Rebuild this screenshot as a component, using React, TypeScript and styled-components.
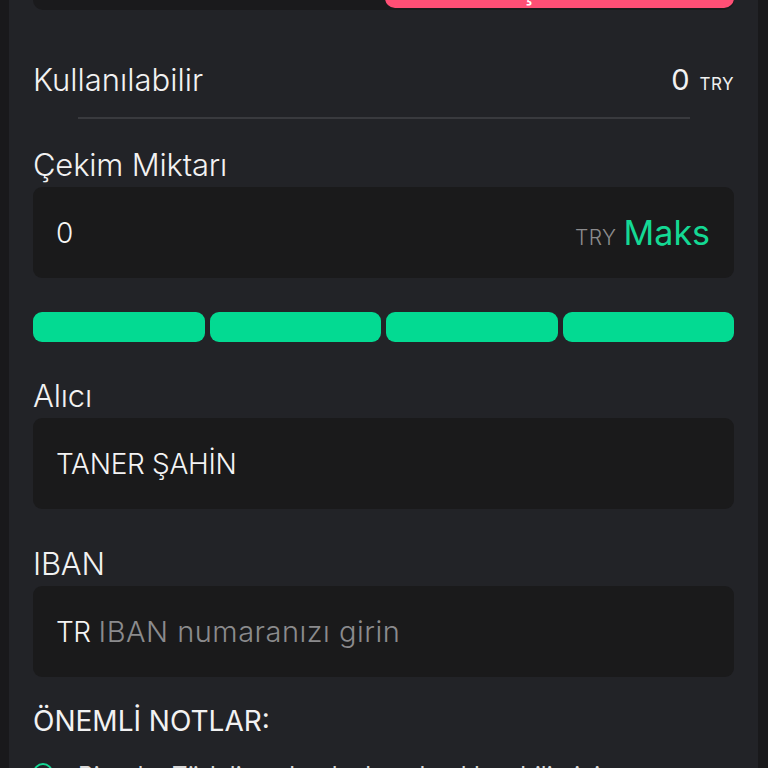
import React from "react";
import styled, { createGlobalStyle } from "styled-components";

const Global = createGlobalStyle`
  html, body { margin: 0; padding: 0; background: #19191b; }
  body { font-family: Inter, "Noto Sans", sans-serif; color: #f2f2f2; }
  * { box-sizing: border-box; }
`;

const Screen = styled.div`
  width: 768px;
  height: 768px;
  overflow: hidden;
  background: #19191b;
  display: flex;
  align-items: flex-start;
`;

const Panel = styled.div`
  margin: 0 10px 0 9px;
  flex: 1;
  min-height: 768px;
  background: #222327;
  padding: 0 24px;
  display: flex;
  flex-direction: column;
  & > * { flex-shrink: 0; }
`;

const TabBar = styled.div`
  margin-top: -40px;
  height: 50px;
  background: #1a1a1c;
  border-radius: 0 0 10px 10px;
  padding: 2px 0;
  display: grid;
  grid-template-columns: 1fr 1fr;
  gap: 2px;
`;

const Tab = styled.div<{ $active?: boolean }>`
  border-radius: 10px;
  background: ${(p) => (p.$active ? "#ff4f75" : "transparent")};
  color: ${(p) => (p.$active ? "#fff" : "#9a9a9c")};
  font-size: 28px;
  display: flex;
  align-items: flex-end;
  justify-content: center;
  line-height: 1;
  padding-bottom: ${(p) => (p.$active ? 4 : 12)}px;
  overflow: hidden;
`;

const BalanceRow = styled.div`
  margin-top: 45px;
  height: 48px;
  display: flex;
  align-items: center;
  justify-content: space-between;
`;

const BalanceLabel = styled.span`
  font-size: 31px;
  font-weight: 300;
`;

const BalanceValue = styled.span`
  display: flex;
  align-items: baseline;
  gap: 10px;
  font-size: 29px;
  font-weight: 400;
`;

const Unit = styled.span<{ $size: number; $color: string }>`
  font-size: ${(p) => p.$size}px;
  color: ${(p) => p.$color};
  letter-spacing: 0.5px;
`;

const Divider = styled.div`
  margin: 14px 44px 0 45px;
  height: 2px;
  background: #393a3e;
`;

const Label = styled.div<{ $top: number }>`
  margin-top: ${(p) => p.$top}px;
  margin-bottom: 4px;
  height: 36px;
  line-height: 36px;
  font-size: 31px;
  font-weight: 300;
  letter-spacing: -0.2px;
`;

const Field = styled.div`
  height: 91px;
  background: #1a1a1b;
  border-radius: 9px;
  padding: 0 24px 0 23px;
  display: flex;
  align-items: center;
  gap: 8px;
  font-size: 28px;
  font-weight: 300;
`;

const FieldValue = styled.span`
  flex: 1;
  color: #f4f4f4;
  letter-spacing: -0.3px;
`;

const Prefix = styled.span`
  color: #f4f4f4;
  font-weight: 300;
  letter-spacing: -0.5px;
`;

const Placeholder = styled.span`
  flex: 1;
  color: #8b8b8d;
  font-size: 29px;
  letter-spacing: 0.5px;
`;

const Suffix = styled.span`
  display: flex;
  align-items: baseline;
  gap: 7px;
`;

const MaxLink = styled.span`
  color: #14d994;
  font-size: 34px;
  font-weight: 400;
`;

const Presets = styled.div`
  margin-top: 34px;
  display: grid;
  grid-template-columns: repeat(4, 1fr);
  gap: 5px;
`;

const Preset = styled.div`
  height: 30px;
  border-radius: 9px;
  background: #03da92;
`;

const NotesTitle = styled.div`
  margin-top: 26px;
  font-size: 28px;
  line-height: 36px;
  font-weight: 400;
`;

const NoteItem = styled.div`
  margin-top: 22px;
  display: flex;
  align-items: flex-start;
  gap: 25px;
  font-size: 24px;
  color: #d8d8d8;
  font-weight: 400;
`;

const Bullet = styled.span`
  margin-top: 2px;
  width: 20px;
  height: 20px;
  border-radius: 50%;
  border: 2px solid #14d994;
  flex-shrink: 0;
`;

const presets = [25, 50, 75, 100];

export default function App() {
  return (
    <>
      <Global />
      <Screen>
        <Panel>
          <TabBar>
            <Tab>Yatırma</Tab>
            <Tab $active>Çekim</Tab>
          </TabBar>

          <BalanceRow>
            <BalanceLabel>Kullanılabilir</BalanceLabel>
            <BalanceValue>
              0<Unit $size={17} $color="#f0f0f0">TRY</Unit>
            </BalanceValue>
          </BalanceRow>
          <Divider />

          <Label $top={28}>Çekim Miktarı</Label>
          <Field>
            <FieldValue>0</FieldValue>
            <Suffix>
              <Unit $size={21} $color="#8b8b8d">TRY</Unit>
              <MaxLink>Maks</MaxLink>
            </Suffix>
          </Field>

          <Presets>
            {presets.map((p) => (
              <Preset key={p} />
            ))}
          </Presets>

          <Label $top={36}>Alıcı</Label>
          <Field>
            <FieldValue>TANER ŞAHİN</FieldValue>
          </Field>

          <Label $top={37}>IBAN</Label>
          <Field>
            <Prefix>TR</Prefix>
            <Placeholder>IBAN numaranızı girin</Placeholder>
          </Field>

          <NotesTitle>ÖNEMLİ NOTLAR:</NotesTitle>
          <NoteItem>
            <Bullet />
            <span>Bir adet Türk lirası banka hesabı ekleyebilirsiniz.</span>
          </NoteItem>
        </Panel>
      </Screen>
    </>
  );
}
